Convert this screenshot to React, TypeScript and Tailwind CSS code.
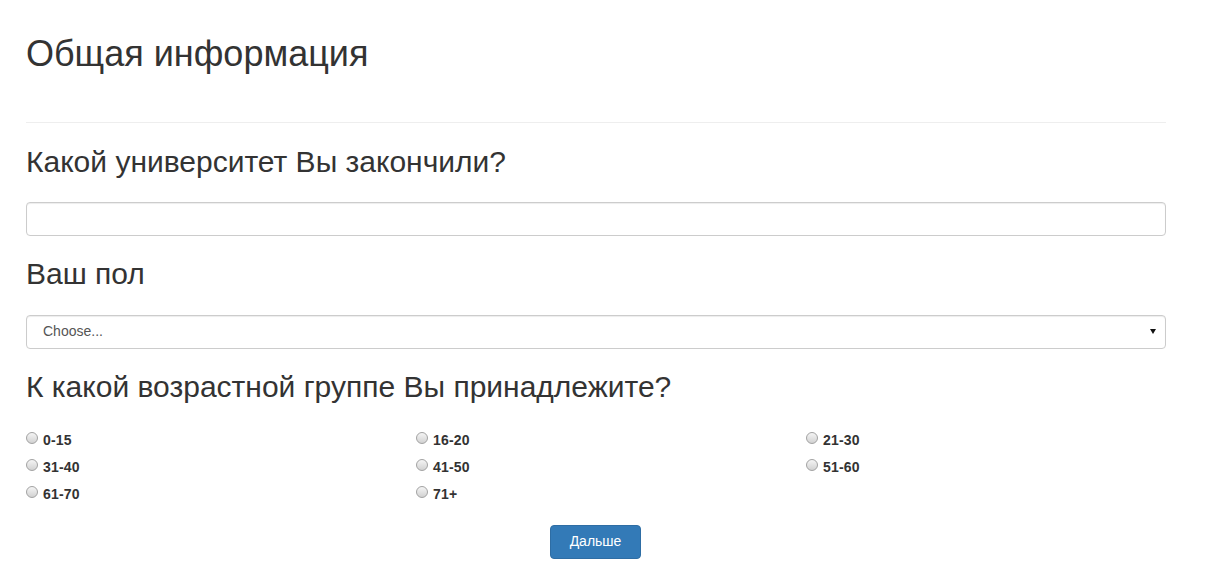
const ageGroups = ["0-15", "16-20", "21-30", "31-40", "41-50", "51-60", "61-70", "71+"];

export default function App() {
  return (
    <div className="min-h-screen bg-white text-[#333] font-['Liberation_Sans',Arial,sans-serif]">
      <div className="ml-[26px] w-[1140px] pt-[34px]">
        <h1 className="text-[36px] leading-[1.1] font-normal">Общая информация</h1>
        <div className="mt-[48px] h-px bg-[#eee]" />

        <h2 className="mt-[22px] text-[30px] leading-[1.1] font-normal">
          Какой университет Вы закончили?
        </h2>
        <input
          type="text"
          className="mt-[24px] block h-[34px] w-full rounded-[4px] border border-[#ccc] px-3 text-[14px] text-[#555] shadow-[inset_0_1px_1px_rgba(0,0,0,0.075)] outline-none"
        />

        <h2 className="mt-[21px] text-[30px] leading-[1.1] font-normal">Ваш пол</h2>
        <div className="relative mt-[25px]">
          <select className="block h-[34px] w-full appearance-none rounded-[4px] border border-[#ccc] bg-white pl-[16px] text-[14px] text-[#555] shadow-[inset_0_1px_1px_rgba(0,0,0,0.075)] outline-none">
            <option>Choose...</option>
            <option>Мужской</option>
            <option>Женский</option>
          </select>
          <svg
            className="pointer-events-none absolute right-[10px] top-[14px]"
            width="6"
            height="5"
            viewBox="0 0 6 5"
          >
            <polygon points="0,0 6,0 3,5" fill="#111" />
          </svg>
        </div>

        <h2 className="mt-[21px] text-[30px] leading-[1.1] font-normal">
          К какой возрастной группе Вы принадлежите?
        </h2>
        <div className="mt-[27px] grid grid-cols-[390px_390px_1fr] gap-y-[7px]">
          {ageGroups.map((g) => (
            <label key={g} className="flex items-start text-[14px] leading-[20px] font-bold tracking-[0.2px]">
              <input
                type="radio"
                name="age"
                className="mt-[2px] h-[12px] w-[12px] shrink-0 appearance-none rounded-full border border-[#a2a2a2] bg-linear-to-b from-[#f5f5f5] to-[#d2d2d2]"
              />
              <span className="ml-[5px]">{g}</span>
            </label>
          ))}
        </div>

        <div className="mt-[21px] flex justify-center pr-px">
          <button className="h-[34px] w-[91px] rounded-[4px] border border-[#2e6da4] bg-[#337ab7] text-[14px] text-white">
            Дальше
          </button>
        </div>
      </div>
    </div>
  );
}
